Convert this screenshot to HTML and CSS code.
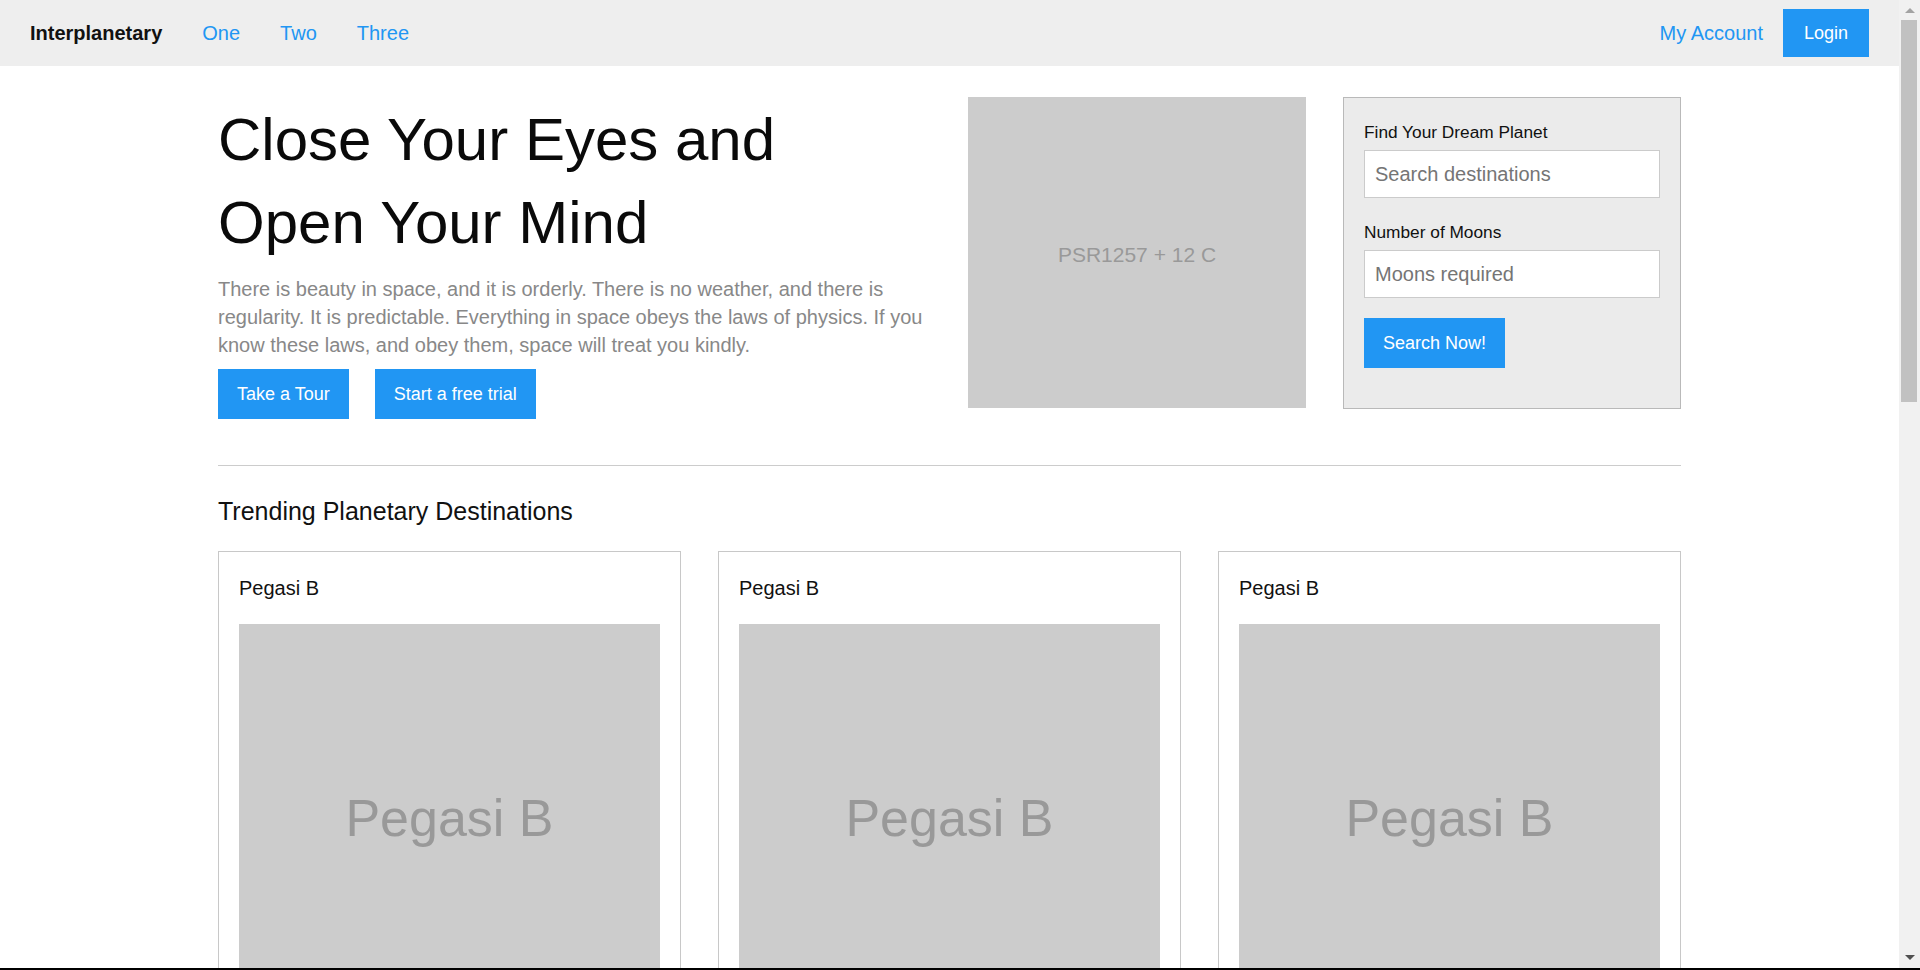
FILE: index.html
```html
<!DOCTYPE html>
<html lang="en">
<head>
<meta charset="utf-8">
<title>Interplanetary</title>
<link rel="stylesheet" href="styles.css">
</head>
<body>
<header class="navbar">
  <nav class="nav-left">
    <a class="brand" href="#">Interplanetary</a>
    <a class="nav-link" href="#">One</a>
    <a class="nav-link" href="#">Two</a>
    <a class="nav-link" href="#">Three</a>
  </nav>
  <nav class="nav-right">
    <a class="nav-link" href="#">My Account</a>
    <a class="btn btn-login" href="#">Login</a>
  </nav>
</header>

<main class="container">
  <section class="hero">
    <div class="hero-text">
      <h1 class="hero-title">Close Your Eyes and<br>Open Your Mind</h1>
      <p class="hero-lead">There is beauty in space, and it is orderly. There is no weather, and there is regularity. It is predictable. Everything in space obeys the laws of physics. If you know these laws, and obey them, space will treat you kindly.</p>
      <div class="hero-actions">
        <a class="btn btn-hero" href="#">Take a Tour</a>
        <a class="btn btn-hero" href="#">Start a free trial</a>
      </div>
    </div>
    <div class="placeholder hero-img">PSR1257 + 12 C</div>
    <form class="search-box">
      <label class="field-label" for="dest">Find Your Dream Planet</label>
      <input class="field-input" id="dest" type="text" placeholder="Search destinations">
      <label class="field-label field-label-next" for="moons">Number of Moons</label>
      <input class="field-input" id="moons" type="text" placeholder="Moons required">
      <button class="btn btn-search" type="button">Search Now!</button>
    </form>
  </section>

  <hr class="divider">

  <h2 class="section-title">Trending Planetary Destinations</h2>

  <div class="cards">
    <article class="card">
      <h3 class="card-title">Pegasi B</h3>
      <div class="placeholder card-img">Pegasi B</div>
    </article>
    <article class="card">
      <h3 class="card-title">Pegasi B</h3>
      <div class="placeholder card-img">Pegasi B</div>
    </article>
    <article class="card">
      <h3 class="card-title">Pegasi B</h3>
      <div class="placeholder card-img">Pegasi B</div>
    </article>
    <article class="card">
      <h3 class="card-title">Pegasi B</h3>
      <div class="placeholder card-img">Pegasi B</div>
    </article>
    <article class="card">
      <h3 class="card-title">Pegasi B</h3>
      <div class="placeholder card-img">Pegasi B</div>
    </article>
    <article class="card">
      <h3 class="card-title">Pegasi B</h3>
      <div class="placeholder card-img">Pegasi B</div>
    </article>
  </div>
</main>

<div class="scrollbar" aria-hidden="true">
  <span class="sb-arrow sb-up"></span>
  <span class="sb-thumb"></span>
  <span class="sb-arrow sb-down"></span>
</div>
<div class="frame-edge" aria-hidden="true"></div>
</body>
</html>
```

FILE: styles.css
```css
* { box-sizing: border-box; }

html, body {
  margin: 0;
  padding: 0;
}

body {
  font-family: "Liberation Sans", Arial, sans-serif;
  color: #111;
  background: #fff;
  padding-right: 21px;
}

a { text-decoration: none; }

/* ---------- navbar ---------- */
.navbar {
  height: 66px;
  background: #eeeeee;
  display: flex;
  align-items: center;
  justify-content: space-between;
  padding: 0 10px;
}

.nav-left,
.nav-right {
  display: flex;
  align-items: center;
}

.brand {
  font-size: 20px;
  font-weight: bold;
  color: #111;
  padding: 0 20px;
}

.nav-link {
  font-size: 20px;
  color: #2196f3;
  padding: 0 20px;
}

.btn {
  display: inline-flex;
  align-items: center;
  justify-content: center;
  background: #2196f3;
  color: #fff;
  font-family: "Liberation Sans", Arial, sans-serif;
  font-size: 18px;
  border: 0;
  cursor: pointer;
}

.btn-login {
  height: 48px;
  padding: 0 21px;
  margin-right: 20px;
}

/* ---------- layout ---------- */
.container {
  width: 1463px;
  margin: 0 auto;
  padding-bottom: 780px;
}

.hero {
  display: grid;
  grid-template-columns: repeat(4, 338px);
  column-gap: 37px;
  align-items: start;
  margin-top: 31px;
}

.hero-text {
  grid-column: span 2;
}

.hero-title {
  margin: 1px 0 0;
  font-size: 60px;
  line-height: 83px;
  font-weight: normal;
  color: #0a0a0a;
}

.hero-lead {
  margin: 11px 0 0;
  font-size: 20px;
  line-height: 28px;
  color: #888;
}

.hero-actions {
  display: flex;
  gap: 26px;
  margin-top: 10px;
}

.btn-hero {
  height: 50px;
  padding: 0 19px;
}

.placeholder {
  background: #cccccc;
  color: #999999;
  display: flex;
  align-items: center;
  justify-content: center;
}

.hero-img {
  height: 311px;
  font-size: 21px;
  padding-top: 4px;
}

/* ---------- search box ---------- */
.search-box {
  display: flex;
  flex-direction: column;
  align-items: flex-start;
  background: #ebebeb;
  border: 1px solid #b9b9b9;
  padding: 24px 20px 40px;
}

.field-label {
  font-size: 17.3px;
  line-height: 20px;
  color: #111;
  margin-bottom: 8px;
}

.field-label-next {
  margin-top: 24px;
}

.field-input {
  width: 100%;
  height: 48px;
  padding: 0 10px;
  font-family: "Liberation Sans", Arial, sans-serif;
  font-size: 20px;
  color: #333;
  background: #fff;
  border: 1px solid #cbcbcb;
  outline: none;
}

.field-input::placeholder {
  color: #757575;
}

.btn-search {
  margin-top: 20px;
  height: 50px;
  padding: 0 19px;
}

/* ---------- trending ---------- */
.divider {
  margin: 46px 0 0;
  border: 0;
  height: 1px;
  background: #cccccc;
}

.section-title {
  margin: 31px 0 26px;
  font-size: 25px;
  line-height: 28px;
  font-weight: normal;
  color: #111;
}

.cards {
  display: grid;
  grid-template-columns: repeat(3, 1fr);
  gap: 37px;
}

.card {
  border: 1px solid #c8c8c8;
  padding: 20px;
}

.card-title {
  margin: 0 0 20px;
  font-size: 20px;
  line-height: 32px;
  font-weight: normal;
  color: #111;
}

.card-img {
  height: 388px;
  font-size: 52px;
}

/* ---------- window chrome (drawn over the page) ---------- */
.scrollbar {
  position: fixed;
  top: 0;
  right: 0;
  bottom: 0;
  width: 21px;
  background: #f1f1f1;
}

.sb-arrow {
  position: absolute;
  left: 6px;
  width: 0;
  height: 0;
  border-left: 5px solid transparent;
  border-right: 5px solid transparent;
}

.sb-up {
  top: 8px;
  border-bottom: 5px solid #a3a3a3;
}

.sb-down {
  bottom: 10px;
  border-top: 5px solid #505050;
}

.sb-thumb {
  position: absolute;
  top: 20px;
  left: 2px;
  width: 16px;
  height: 382px;
  background: #c1c1c1;
}

.frame-edge {
  position: fixed;
  left: 0;
  right: 0;
  bottom: 0;
  height: 2px;
  background: #000;
}
```
